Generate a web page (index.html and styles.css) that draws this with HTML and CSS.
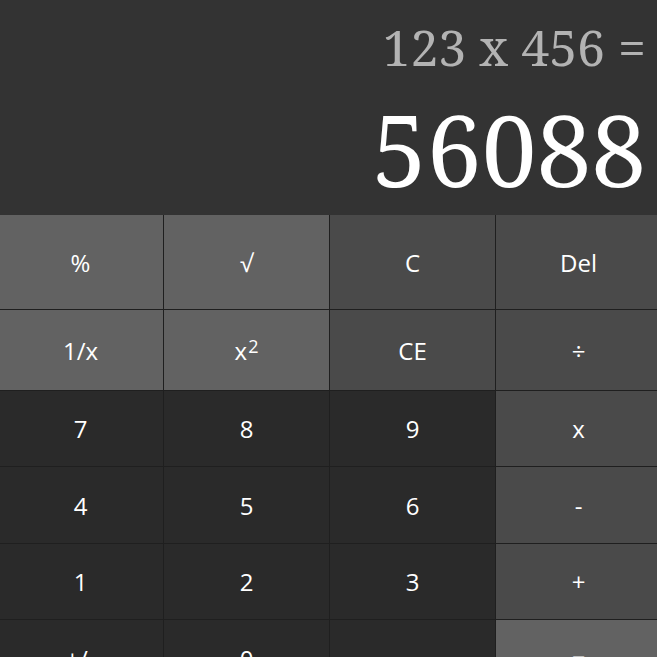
FILE: index.html
```html
<!DOCTYPE html>
<html>
<head>
<meta charset="utf-8">
<link rel="stylesheet" href="styles.css">
</head>
<body>
<div class="calc">
  <div class="display">
    <div class="expr">123 x 456 =</div>
    <div class="result">56088</div>
  </div>
  <div class="keys">
    <div class="key fn">%</div>
    <div class="key fn">√</div>
    <div class="key op">C</div>
    <div class="key op">Del</div>
    <div class="key fn">1/x</div>
    <div class="key fn">x<sup>2</sup></div>
    <div class="key op">CE</div>
    <div class="key op">÷</div>
    <div class="key num">7</div>
    <div class="key num">8</div>
    <div class="key num">9</div>
    <div class="key op">x</div>
    <div class="key num">4</div>
    <div class="key num">5</div>
    <div class="key num">6</div>
    <div class="key op">-</div>
    <div class="key num">1</div>
    <div class="key num">2</div>
    <div class="key num">3</div>
    <div class="key op">+</div>
    <div class="key num">+/-</div>
    <div class="key num">0</div>
    <div class="key num">.</div>
    <div class="key eq">=</div>
  </div>
</div>
</body>
</html>
```
FILE: styles.css
```css
html, body {
  margin: 0;
  padding: 0;
  background: #1f1f1f;
  overflow: hidden;
}
.calc {
  width: 663px;
  margin-left: -2px;
  font-family: "Open Sans", "Noto Sans", sans-serif;
}
.display {
  height: 215px;
  background: #333333;
  box-sizing: border-box;
  padding: 14px 15px 0 0;
  text-align: right;
  font-family: "Noto Serif", "DejaVu Serif", serif;
  overflow: hidden;
}
.expr {
  color: #b3b3b3;
  font-size: 50px;
  line-height: 66px;
}
.result {
  color: #ffffff;
  font-size: 98px;
  line-height: 110px;
  margin-top: 14px;
}
.keys {
  display: grid;
  grid-template-columns: repeat(4, 165px);
  grid-template-rows: 94px 80px 75px 76px 75px 76px;
  gap: 1px;
  background: #1f1f1f;
}
.key {
  display: flex;
  align-items: center;
  justify-content: center;
  color: #ffffff;
  font-size: 24px;
}
.key sup {
  font-size: 18px;
  line-height: 1;
  position: relative;
  top: -4px;
  margin-left: 1px;
}
.fn { background: #626262; }
.op { background: #4a4a4a; }
.num { background: #2a2a2a; }
.eq { background: #626262; }
```
